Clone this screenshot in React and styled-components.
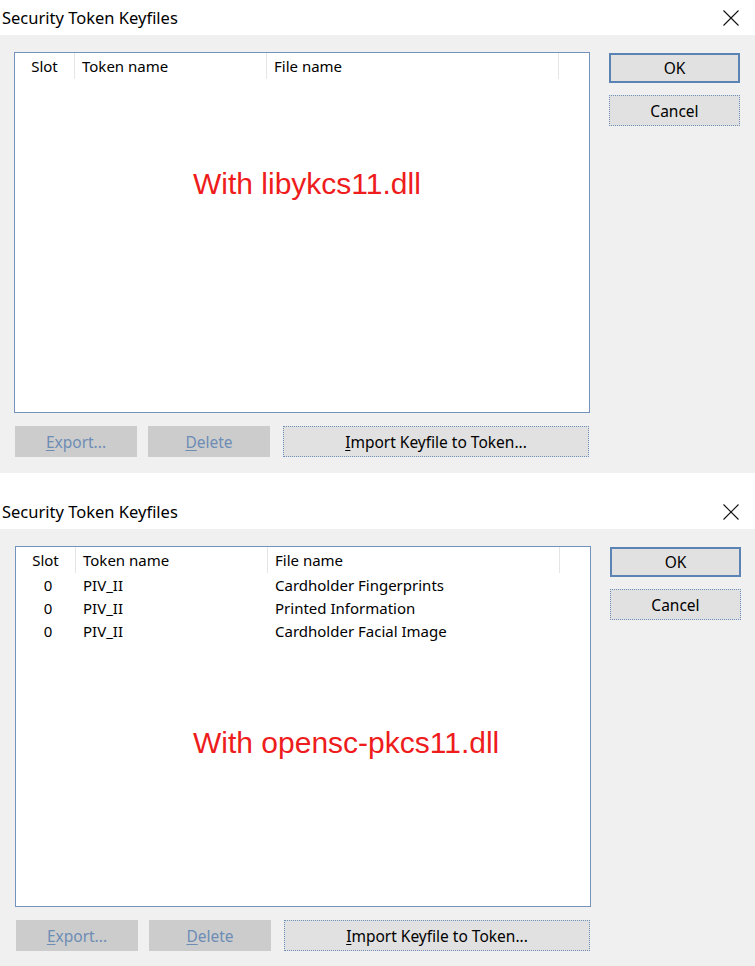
import React from "react";
import styled, { createGlobalStyle } from "styled-components";

const GlobalStyle = createGlobalStyle`
  html, body { margin: 0; padding: 0; background: #ffffff; }
  body { font-family: "Noto Sans", "Open Sans", sans-serif; }
`;

const UI_FONT = `"Noto Sans", "Open Sans", sans-serif`;

const Page = styled.div`
  width: 755px;
  display: flex;
  flex-direction: column;
  gap: 21px;
`;

const Dialog = styled.section`
  display: flex;
  flex-direction: column;
`;

const TitleBar = styled.header`
  height: 35px;
  background: #ffffff;
  display: flex;
  align-items: center;
  justify-content: space-between;
  padding: 0 16px 0 2px;
  box-sizing: border-box;
`;

const Title = styled.h1`
  margin: 0;
  font-family: ${UI_FONT};
  font-weight: 400;
  font-size: 16.5px;
  color: #000;
  line-height: 1;
  padding-top: 1px;
`;

const CloseIcon = styled.svg`
  width: 16px;
  height: 16px;
  display: block;
`;

const Body = styled.div`
  background: #f0f0f0;
  height: 438px;
  box-sizing: border-box;
  padding: 17px 0 0 ${(p) => 14 + p.$shift}px;
  display: flex;
  gap: 19px;
`;

const LeftCol = styled.div`
  width: 576px;
  display: flex;
  flex-direction: column;
  gap: 13px;
`;

const RightCol = styled.div`
  width: 131px;
  display: flex;
  flex-direction: column;
  gap: 12px;
  padding-top: 1px;
`;

const List = styled.div`
  position: relative;
  height: 361px;
  box-sizing: border-box;
  border: 1px solid #7393bc;
  background: #ffffff;
`;

const Grid = styled.div`
  display: grid;
  grid-template-columns: 60px 192px 292px;
  font-family: ${UI_FONT};
  font-size: 15px;
  color: #000;
`;

const HeaderCell = styled.div`
  height: 26px;
  box-sizing: border-box;
  display: flex;
  align-items: center;
  justify-content: ${(p) => (p.$center ? "center" : "flex-start")};
  padding-left: ${(p) => (p.$center ? 0 : 7)}px;
  border-style: solid;
  border-width: 0 1px 0 0;
  border-image: linear-gradient(to bottom, transparent 1px, #e5e5e5 1px, #e5e5e5 26px) 1;
`;

const Cell = styled.div`
  height: 23px;
  display: flex;
  align-items: center;
  justify-content: ${(p) => (p.$center ? "center" : "flex-start")};
  padding-left: ${(p) => (p.$center ? 4 : 7)}px;
  white-space: nowrap;
`;

const Annotation = styled.div`
  position: absolute;
  left: ${(p) => p.$x}px;
  top: ${(p) => p.$y}px;
  font-family: "Liberation Sans", Arial, sans-serif;
  font-size: 30px;
  color: #ee1c1c;
  white-space: nowrap;
  line-height: normal;
`;

const ButtonRow = styled.div`
  display: flex;
  padding-left: 1px;
`;

const Button = styled.button`
  box-sizing: border-box;
  width: ${(p) => p.$w}px;
  height: ${(p) => p.$h || 31}px;
  margin-left: ${(p) => p.$ml || 0}px;
  font-family: ${UI_FONT};
  font-size: 15.5px;
  padding: 0;
  color: #000;
  background: #e1e1e1;
  border: 1px dotted #6f8fb8;
  cursor: default;

  &.default {
    border: 2px solid #5b84b4;
  }
  &:disabled {
    background: #cccccc;
    border: none;
    color: #6d8db5;
  }
  u {
    text-decoration: underline;
    text-underline-offset: 2px;
  }
`;

function Close() {
  return (
    <CloseIcon viewBox="0 0 16 16">
      <path d="M0.5 0.5 L15.5 15.5 M15.5 0.5 L0.5 15.5" stroke="#111" strokeWidth="1.1" fill="none" />
    </CloseIcon>
  );
}

function KeyfileDialog({ shift, rows, note, noteX, noteY }) {
  return (
    <Dialog>
      <TitleBar>
        <Title>Security Token Keyfiles</Title>
        <Close />
      </TitleBar>
      <Body $shift={shift}>
        <LeftCol>
          <List>
            <Grid>
              <HeaderCell $center>Slot</HeaderCell>
              <HeaderCell>Token name</HeaderCell>
              <HeaderCell>File name</HeaderCell>
              {rows.map((r, i) => (
                <React.Fragment key={i}>
                  <Cell $center>{r.slot}</Cell>
                  <Cell>{r.token}</Cell>
                  <Cell>{r.file}</Cell>
                </React.Fragment>
              ))}
            </Grid>
            <Annotation $x={noteX} $y={noteY}>{note}</Annotation>
          </List>
          <ButtonRow>
            <Button $w={122} disabled>
              <u>E</u>xport...
            </Button>
            <Button $w={122} $ml={11} disabled>
              <u>D</u>elete
            </Button>
            <Button $w={306} $ml={13}>
              <u>I</u>mport Keyfile to Token...
            </Button>
          </ButtonRow>
        </LeftCol>
        <RightCol>
          <Button className="default" $w={131} $h={30}>OK</Button>
          <Button $w={131}>Cancel</Button>
        </RightCol>
      </Body>
    </Dialog>
  );
}

const rows2 = [
  { slot: "0", token: "PIV_II", file: "Cardholder Fingerprints" },
  { slot: "0", token: "PIV_II", file: "Printed Information" },
  { slot: "0", token: "PIV_II", file: "Cardholder Facial Image" },
];

export default function App() {
  return (
    <>
      <GlobalStyle />
      <Page>
        <KeyfileDialog shift={0} rows={[]} note="With libykcs11.dll" noteX={178} noteY={114} />
        <KeyfileDialog shift={1} rows={rows2} note="With opensc-pkcs11.dll" noteX={177} noteY={179} />
      </Page>
    </>
  );
}
